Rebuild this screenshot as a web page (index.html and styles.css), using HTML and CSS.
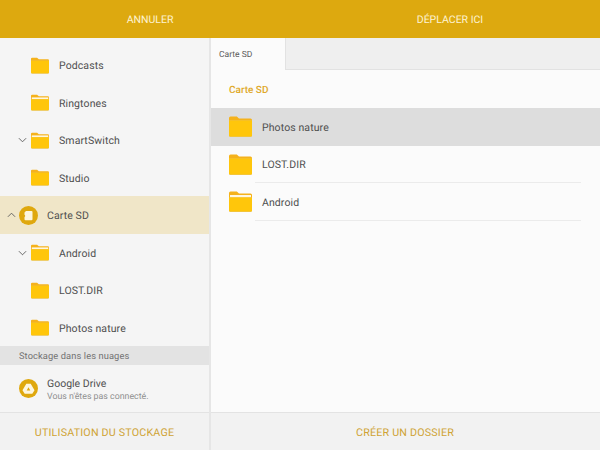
FILE: index.html
```html
<!DOCTYPE html>
<html lang="fr">
<head>
<meta charset="utf-8">
<title>Déplacer</title>
<link rel="stylesheet" href="styles.css">
</head>
<body>
<svg class="defs" width="0" height="0">
  <defs>
    <symbol id="folder" viewBox="0 0 23 21">
      <path d="M0 2a1.500 1.500 0 0 1 1.500-1.500h6.300l2.200 2H21.500a1.500 1.500 0 0 1 1.500 1.500v3H0z" fill="#f5b21c"/>
      <path d="M0 4.500h23v15a1.500 1.500 0 0 1-1.500 1.500h-20A1.500 1.500 0 0 1 0 19.500z" fill="#e6c468"/>
      <path d="M0 4.500h23v14.700a1.300 1.300 0 0 1-1.300 1.300H1.300A1.300 1.300 0 0 1 0 19.200z" fill="#ffc60b"/>
    </symbol>
    <symbol id="folder-files" viewBox="0 0 23 21">
      <path d="M0 2a1.500 1.500 0 0 1 1.500-1.500h6.300l2.200 2H21.500a1.500 1.500 0 0 1 1.500 1.500v4H0z" fill="#f5b21c"/>
      <rect x="1" y="4" width="21" height="2.500" fill="#fff7e0"/>
      <path d="M0 6.500h23v13a1.500 1.500 0 0 1-1.500 1.500h-20A1.500 1.500 0 0 1 0 19.500z" fill="#e6c468"/>
      <path d="M0 6.500h23v12.700a1.300 1.300 0 0 1-1.300 1.300H1.300A1.300 1.300 0 0 1 0 19.200z" fill="#ffc60b"/>
    </symbol>
    <symbol id="chev-down" viewBox="0 0 10 6">
      <path d="M1 1l4 4 4-4" fill="none" stroke="#5a5a5a" stroke-width="1"/>
    </symbol>
    <symbol id="chev-up" viewBox="0 0 10 6">
      <path d="M1 5l4-4 4 4" fill="none" stroke="#5a5a5a" stroke-width="1"/>
    </symbol>
  </defs>
</svg>
<div class="app">
  <header class="topbar">
    <div class="topbar-btn topbar-left">ANNULER</div>
    <div class="topbar-btn topbar-right">DÉPLACER ICI</div>
  </header>
  <div class="main">
    <aside class="side">
      <div class="tree">
        <div class="row"><span class="chev"></span><svg class="ic"><use href="#folder"/></svg><span class="name">Podcasts</span></div>
        <div class="row"><span class="chev"></span><svg class="ic"><use href="#folder-files"/></svg><span class="name">Ringtones</span></div>
        <div class="row"><span class="chev"><svg class="chev-ic"><use href="#chev-down"/></svg></span><svg class="ic"><use href="#folder-files"/></svg><span class="name">SmartSwitch</span></div>
        <div class="row"><span class="chev"></span><svg class="ic"><use href="#folder"/></svg><span class="name">Studio</span></div>
        <div class="row row-root">
          <span class="chev-root"><svg class="chev-ic"><use href="#chev-up"/></svg></span>
          <svg class="badge" viewBox="0 0 19 19">
            <circle cx="9.500" cy="9.500" r="9.500" fill="#dfa80e"/>
            <path d="M7 5h5.500a1 1 0 0 1 1 1v7.200a1 1 0 0 1-1 1h-6a1 1 0 0 1-1-1V11l.6-.5V9.300L5.500 8.800V6.500z" fill="#fdf6df"/>
          </svg>
          <span class="name name-root">Carte SD</span>
        </div>
        <div class="row"><span class="chev"><svg class="chev-ic"><use href="#chev-down"/></svg></span><svg class="ic"><use href="#folder-files"/></svg><span class="name">Android</span></div>
        <div class="row"><span class="chev"></span><svg class="ic"><use href="#folder"/></svg><span class="name">LOST.DIR</span></div>
        <div class="row"><span class="chev"></span><svg class="ic"><use href="#folder"/></svg><span class="name">Photos nature</span></div>
      </div>
      <div class="section">Stockage dans les nuages</div>
      <div class="drive">
        <svg class="badge" viewBox="0 0 19 19">
          <circle cx="9.500" cy="9.500" r="9.500" fill="#dfa80e"/>
          <path fill-rule="evenodd" d="M7.300 4.800h4.400l3.800 6.500-2.200 3.500H5.700l-2.200-3.500zM9.500 8.300l-1.800 3.200h3.600z" fill="#fdf6df"/>
        </svg>
        <div class="drive-text">
          <div class="drive-name">Google Drive</div>
          <div class="drive-sub">Vous n'êtes pas connecté.</div>
        </div>
      </div>
      <div class="foot">UTILISATION DU STOCKAGE</div>
    </aside>
    <section class="content">
      <div class="tabs"><div class="tab">Carte SD</div></div>
      <div class="crumb">Carte SD</div>
      <div class="list">
        <div class="item item-on"><svg class="ic-lg"><use href="#folder"/></svg><span class="item-name">Photos nature</span></div>
        <div class="item"><svg class="ic-lg"><use href="#folder"/></svg><span class="item-name">LOST.DIR</span></div>
        <div class="item"><svg class="ic-lg"><use href="#folder-files"/></svg><span class="item-name">Android</span></div>
      </div>
      <div class="foot foot-right">CRÉER UN DOSSIER</div>
    </section>
  </div>
</div>
</body>
</html>
```
FILE: styles.css
```css
* { box-sizing: border-box; }
html, body { margin: 0; padding: 0; }
body { width: 600px; height: 450px; overflow: hidden; font-family: Roboto, "Liberation Sans", sans-serif; background: #fafafa; text-rendering: geometricPrecision; }
.defs { display: block; height: 0; }
.app { width: 600px; height: 450px; display: flex; flex-direction: column; }
.topbar { height: 38px; flex: none; display: flex; background: #dda90f; color: #fdf3d2; font-size: 10.500px; }
.topbar-btn { display: flex; align-items: center; justify-content: center; padding-top: 1px; }
.topbar-left { width: 300px; }
.topbar-right { width: 300px; }
.main { flex: 1; display: flex; min-height: 0; }
.side { width: 211px; flex: none; display: flex; flex-direction: column; background: #f5f5f5; border-right: 2px solid #e6e6e6; }
.tree { padding-top: 8.400px; }
.row { height: 37.500px; display: flex; align-items: center; }
.chev { width: 31px; flex: none; display: flex; justify-content: flex-end; padding-right: 4px; }
.chev-ic { width: 9px; height: 6px; display: block; }
.ic { width: 18px; height: 17px; flex: none; }
.name { margin-left: 10px; padding-top: 1.200px; font-size: 10.500px; color: #4f4f4f; letter-spacing: .1px; }
.name-root { margin-left: 9px; }
.row-root { background: #f0e6c8; }
.chev-root { width: 19px; flex: none; display: flex; justify-content: flex-end; padding-right: 3px; }
.badge { width: 19px; height: 19px; flex: none; display: block; }
.section { height: 19px; margin-top: -.400px; display: flex; align-items: center; padding-left: 19px; padding-top: 1px; background: #e3e3e3; color: #727272; font-size: 9.300px; letter-spacing: .1px; }
.drive { height: 47px; flex: none; display: flex; align-items: center; padding-left: 19px; }
.drive-text { margin-left: 9px; padding-top: 4px; }
.drive-name { font-size: 10.500px; color: #4f4f4f; line-height: 14px; }
.drive-sub { font-size: 8.800px; color: #909090; line-height: 13px; }
.foot { height: 38px; flex: none; margin-top: auto; display: flex; align-items: center; justify-content: center; padding-top: 1px; background: #f2f2f2; border-top: 1px solid #e3e3e3; color: #cfa334; font-size: 10.700px; letter-spacing: .2px; }
.foot-right { padding-right: 1px; }
.content { flex: 1; display: flex; flex-direction: column; min-width: 0; background: #fbfbfb; }
.tabs { height: 32px; flex: none; background: #efefef; border-bottom: 1px solid #e2e2e2; display: flex; }
.tab { width: 75px; height: 32px; display: flex; align-items: center; padding-left: 8px; padding-top: 1px; background: #fbfbfb; border-right: 1px solid #e2e2e2; color: #5a5a5a; font-size: 8.500px; }
.crumb { height: 38px; flex: none; display: flex; align-items: center; padding-left: 18px; padding-top: 2px; color: #e0a92a; font-size: 10px; font-weight: 500; }
.list { display: flex; flex-direction: column; }
.item { height: 37.500px; display: flex; align-items: center; padding-left: 18px; position: relative; }
.item-on { background: #dddddd; }
.ic-lg { width: 23px; height: 21px; flex: none; }
.item-name { margin-left: 10px; padding-top: 1px; font-size: 10.500px; color: #4f4f4f; letter-spacing: .1px; }
.item::after { content: ""; position: absolute; left: 44px; right: 19px; bottom: 0; height: 1px; background: #ebebeb; }
.item-on::after { display: none; }
```
